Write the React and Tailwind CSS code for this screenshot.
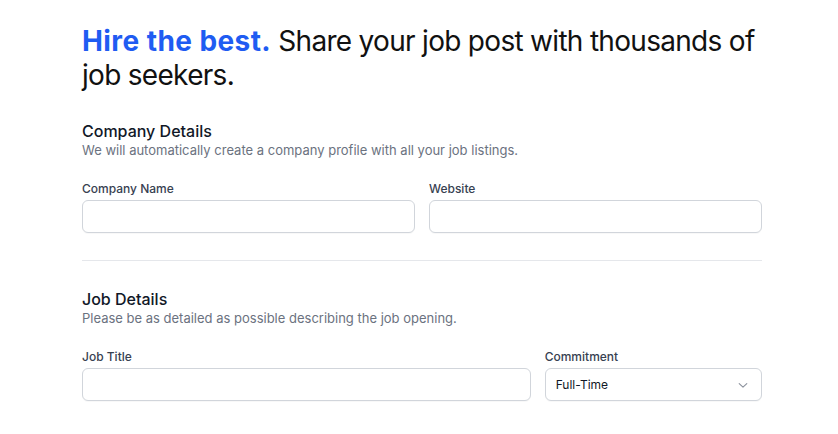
import React from "react";

function Field({ label, children, className = "" }) {
  return (
    <div className={className}>
      <label className="block text-[12px] leading-4 font-medium text-[#374151]">{label}</label>
      <div className="mt-[3px]">{children}</div>
    </div>
  );
}

function Input() {
  return (
    <input
      type="text"
      className="block w-full h-[33px] rounded-[6px] border border-[#d1d5db] bg-white px-3 text-[12px] text-[#111827] shadow-[0_1px_1px_rgba(0,0,0,0.03)] outline-none"
    />
  );
}

export default function App() {
  return (
    <div className="min-h-[434px] bg-white font-['Inter',sans-serif]">
      <div className="ml-[82px] w-[680px] pt-[24px]">
        <h1 className="text-[28px] leading-[34px] tracking-[-0.025em] text-[#111111]">
          <span className="font-bold tracking-[0.015em] text-[#1f5cf2]">Hire the best.</span>{" "}
          Share your job post with thousands of job seekers.
        </h1>

        <section className="pt-[29px] pb-[27px] border-b border-[#e5e7eb]">
          <h2 className="text-[16px] leading-5 font-medium text-[#111827]">Company Details</h2>
          <p className="text-[13px] leading-4 text-[#6b7280] mt-[1px]">
            We will automatically create a company profile with all your job listings.
          </p>
          <div className="mt-[23px] grid grid-cols-2 gap-[14px]">
            <Field label="Company Name">
              <Input />
            </Field>
            <Field label="Website">
              <Input />
            </Field>
          </div>
        </section>

        <section className="pt-[28px]">
          <h2 className="text-[16px] leading-5 font-medium text-[#111827]">Job Details</h2>
          <p className="text-[13px] leading-4 text-[#6b7280] mt-[1px]">
            Please be as detailed as possible describing the job opening.
          </p>
          <div className="mt-[23px] grid grid-cols-3 gap-[14px]">
            <Field label="Job Title" className="col-span-2">
              <Input />
            </Field>
            <Field label="Commitment">
              <div className="flex h-[33px] w-full items-center justify-between rounded-[6px] border border-[#d1d5db] bg-white pl-[10px] pr-[12px] text-[12px] text-[#111827] shadow-[0_1px_1px_rgba(0,0,0,0.03)]">
                <span>Full-Time</span>
                <svg width="12" height="12" viewBox="0 0 12 12" fill="none" stroke="#8b919c" strokeWidth="1.1" strokeLinecap="round" strokeLinejoin="round">
                  <path d="M2.2 4.6l3.8 3.6 3.8-3.6" />
                </svg>
              </div>
            </Field>
          </div>
        </section>
      </div>
    </div>
  );
}
